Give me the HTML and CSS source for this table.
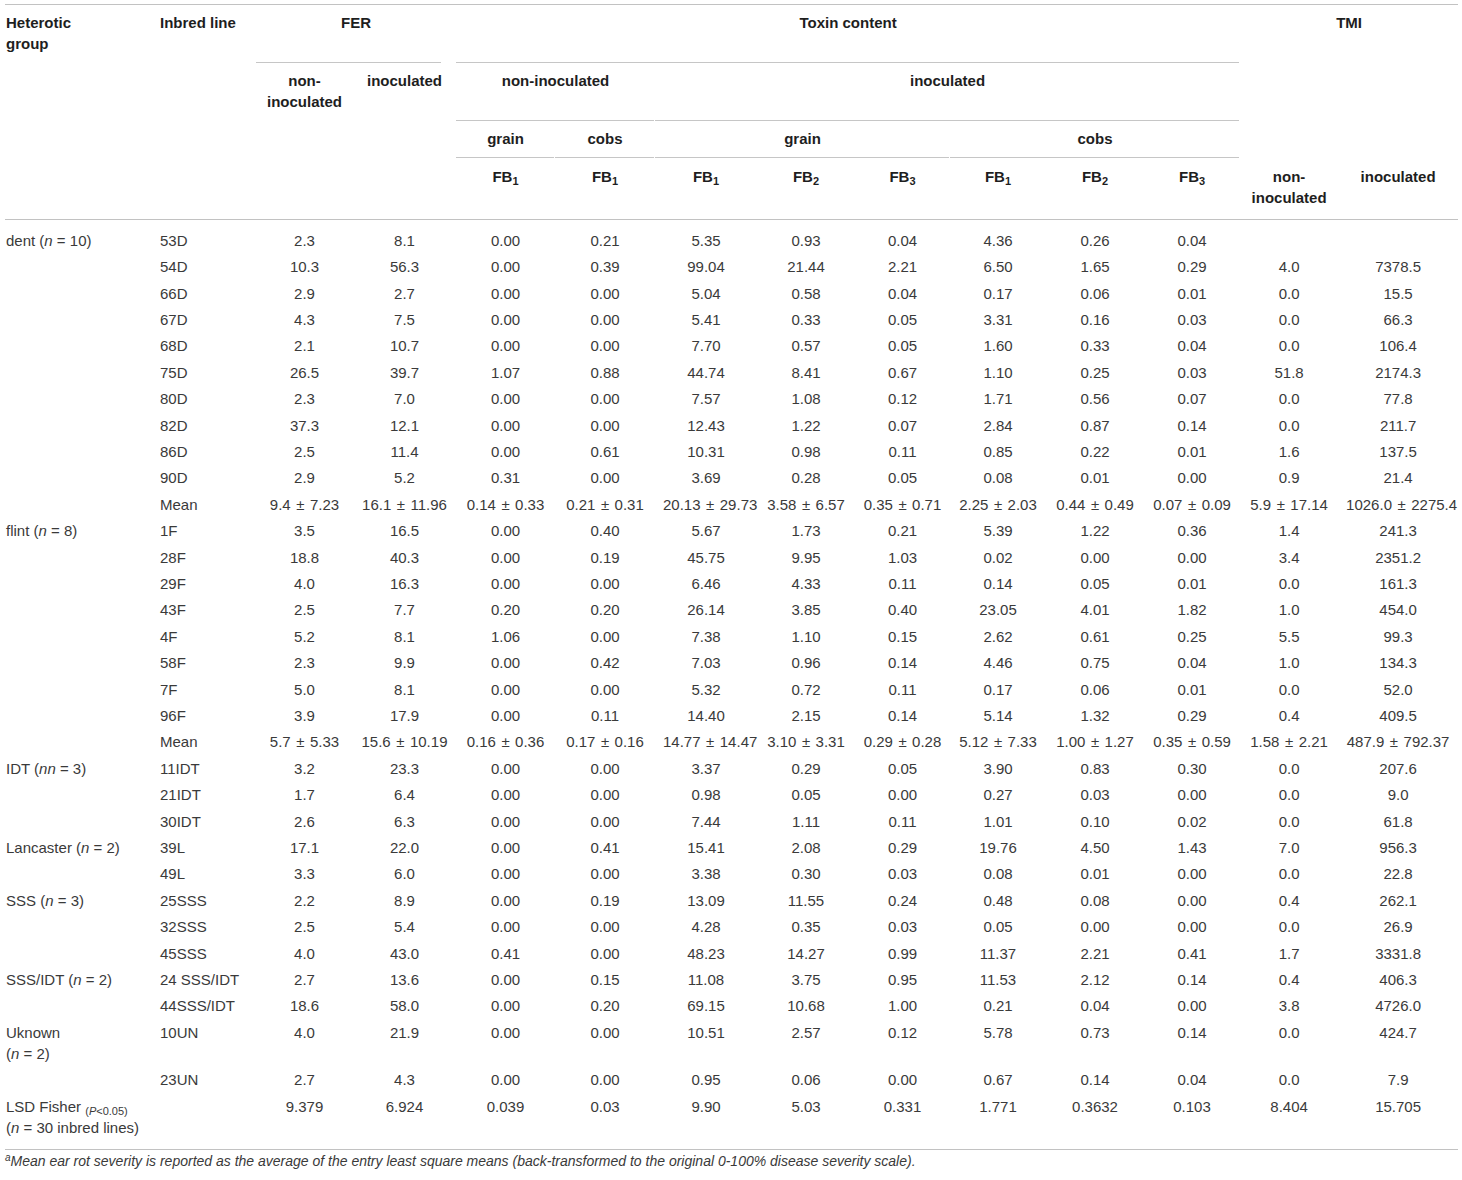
FILE: index.html
```html
<!DOCTYPE html>
<html lang="en">
<head>
<meta charset="utf-8">
<title>Table</title>
<link rel="stylesheet" href="styles.css">
</head>
<body>
<div class="wrap">
<table class="data">
<colgroup>
<col class="c1"><col class="c2"><col class="c3"><col class="c4"><col class="c5"><col class="c6"><col class="c7"><col class="c8"><col class="c9"><col class="c10"><col class="c11"><col class="c12"><col class="c13"><col class="c14">
</colgroup>
<thead>
<tr class="r1">
<th rowspan="4" class="l first">Heterotic group</th>
<th rowspan="4" class="l">Inbred line</th>
<th colspan="2" class="u ufer">FER</th>
<th colspan="8" class="u">Toxin content</th>
<th colspan="2" rowspan="3">TMI</th>
</tr>
<tr class="r2">
<th rowspan="3">non-inoculated</th>
<th rowspan="3">inoculated</th>
<th colspan="2" class="u">non-inoculated</th>
<th colspan="6" class="u">inoculated</th>
</tr>
<tr class="r3">
<th class="u">grain</th>
<th class="u">cobs</th>
<th colspan="3" class="u">grain</th>
<th colspan="3" class="u">cobs</th>
</tr>
<tr class="r4">
<th>FB<sub class="s">1</sub></th>
<th>FB<sub class="s">1</sub></th>
<th>FB<sub class="s">1</sub></th>
<th>FB<sub class="s">2</sub></th>
<th>FB<sub class="s">3</sub></th>
<th>FB<sub class="s">1</sub></th>
<th>FB<sub class="s">2</sub></th>
<th>FB<sub class="s">3</sub></th>
<th>non-inoculated</th>
<th>inoculated</th>
</tr>
</thead>
<tbody>
<tr class="top"><td>dent (<i>n</i> = 10)</td><td>53D</td><td>2.3</td><td>8.1</td><td>0.00</td><td>0.21</td><td>5.35</td><td>0.93</td><td>0.04</td><td>4.36</td><td>0.26</td><td>0.04</td><td></td><td></td></tr>
<tr><td></td><td>54D</td><td>10.3</td><td>56.3</td><td>0.00</td><td>0.39</td><td>99.04</td><td>21.44</td><td>2.21</td><td>6.50</td><td>1.65</td><td>0.29</td><td>4.0</td><td>7378.5</td></tr>
<tr><td></td><td>66D</td><td>2.9</td><td>2.7</td><td>0.00</td><td>0.00</td><td>5.04</td><td>0.58</td><td>0.04</td><td>0.17</td><td>0.06</td><td>0.01</td><td>0.0</td><td>15.5</td></tr>
<tr><td></td><td>67D</td><td>4.3</td><td>7.5</td><td>0.00</td><td>0.00</td><td>5.41</td><td>0.33</td><td>0.05</td><td>3.31</td><td>0.16</td><td>0.03</td><td>0.0</td><td>66.3</td></tr>
<tr><td></td><td>68D</td><td>2.1</td><td>10.7</td><td>0.00</td><td>0.00</td><td>7.70</td><td>0.57</td><td>0.05</td><td>1.60</td><td>0.33</td><td>0.04</td><td>0.0</td><td>106.4</td></tr>
<tr><td></td><td>75D</td><td>26.5</td><td>39.7</td><td>1.07</td><td>0.88</td><td>44.74</td><td>8.41</td><td>0.67</td><td>1.10</td><td>0.25</td><td>0.03</td><td>51.8</td><td>2174.3</td></tr>
<tr><td></td><td>80D</td><td>2.3</td><td>7.0</td><td>0.00</td><td>0.00</td><td>7.57</td><td>1.08</td><td>0.12</td><td>1.71</td><td>0.56</td><td>0.07</td><td>0.0</td><td>77.8</td></tr>
<tr><td></td><td>82D</td><td>37.3</td><td>12.1</td><td>0.00</td><td>0.00</td><td>12.43</td><td>1.22</td><td>0.07</td><td>2.84</td><td>0.87</td><td>0.14</td><td>0.0</td><td>211.7</td></tr>
<tr><td></td><td>86D</td><td>2.5</td><td>11.4</td><td>0.00</td><td>0.61</td><td>10.31</td><td>0.98</td><td>0.11</td><td>0.85</td><td>0.22</td><td>0.01</td><td>1.6</td><td>137.5</td></tr>
<tr><td></td><td>90D</td><td>2.9</td><td>5.2</td><td>0.31</td><td>0.00</td><td>3.69</td><td>0.28</td><td>0.05</td><td>0.08</td><td>0.01</td><td>0.00</td><td>0.9</td><td>21.4</td></tr>
<tr><td></td><td>Mean</td><td>9.4<span class="pm">±</span>7.23</td><td>16.1<span class="pm">±</span>11.96</td><td>0.14<span class="pm">±</span>0.33</td><td>0.21<span class="pm">±</span>0.31</td><td>20.13<span class="pm">±</span>29.73</td><td>3.58<span class="pm">±</span>6.57</td><td>0.35<span class="pm">±</span>0.71</td><td>2.25<span class="pm">±</span>2.03</td><td>0.44<span class="pm">±</span>0.49</td><td>0.07<span class="pm">±</span>0.09</td><td>5.9<span class="pm">±</span>17.14</td><td>1026.0<span class="pm">±</span>2275.4</td></tr>
<tr><td>flint (<i>n</i> = 8)</td><td>1F</td><td>3.5</td><td>16.5</td><td>0.00</td><td>0.40</td><td>5.67</td><td>1.73</td><td>0.21</td><td>5.39</td><td>1.22</td><td>0.36</td><td>1.4</td><td>241.3</td></tr>
<tr><td></td><td>28F</td><td>18.8</td><td>40.3</td><td>0.00</td><td>0.19</td><td>45.75</td><td>9.95</td><td>1.03</td><td>0.02</td><td>0.00</td><td>0.00</td><td>3.4</td><td>2351.2</td></tr>
<tr><td></td><td>29F</td><td>4.0</td><td>16.3</td><td>0.00</td><td>0.00</td><td>6.46</td><td>4.33</td><td>0.11</td><td>0.14</td><td>0.05</td><td>0.01</td><td>0.0</td><td>161.3</td></tr>
<tr><td></td><td>43F</td><td>2.5</td><td>7.7</td><td>0.20</td><td>0.20</td><td>26.14</td><td>3.85</td><td>0.40</td><td>23.05</td><td>4.01</td><td>1.82</td><td>1.0</td><td>454.0</td></tr>
<tr><td></td><td>4F</td><td>5.2</td><td>8.1</td><td>1.06</td><td>0.00</td><td>7.38</td><td>1.10</td><td>0.15</td><td>2.62</td><td>0.61</td><td>0.25</td><td>5.5</td><td>99.3</td></tr>
<tr><td></td><td>58F</td><td>2.3</td><td>9.9</td><td>0.00</td><td>0.42</td><td>7.03</td><td>0.96</td><td>0.14</td><td>4.46</td><td>0.75</td><td>0.04</td><td>1.0</td><td>134.3</td></tr>
<tr><td></td><td>7F</td><td>5.0</td><td>8.1</td><td>0.00</td><td>0.00</td><td>5.32</td><td>0.72</td><td>0.11</td><td>0.17</td><td>0.06</td><td>0.01</td><td>0.0</td><td>52.0</td></tr>
<tr><td></td><td>96F</td><td>3.9</td><td>17.9</td><td>0.00</td><td>0.11</td><td>14.40</td><td>2.15</td><td>0.14</td><td>5.14</td><td>1.32</td><td>0.29</td><td>0.4</td><td>409.5</td></tr>
<tr><td></td><td>Mean</td><td>5.7<span class="pm">±</span>5.33</td><td>15.6<span class="pm">±</span>10.19</td><td>0.16<span class="pm">±</span>0.36</td><td>0.17<span class="pm">±</span>0.16</td><td>14.77<span class="pm">±</span>14.47</td><td>3.10<span class="pm">±</span>3.31</td><td>0.29<span class="pm">±</span>0.28</td><td>5.12<span class="pm">±</span>7.33</td><td>1.00<span class="pm">±</span>1.27</td><td>0.35<span class="pm">±</span>0.59</td><td>1.58<span class="pm">±</span>2.21</td><td>487.9<span class="pm">±</span>792.37</td></tr>
<tr><td>IDT (<i>nn</i> = 3)</td><td>11IDT</td><td>3.2</td><td>23.3</td><td>0.00</td><td>0.00</td><td>3.37</td><td>0.29</td><td>0.05</td><td>3.90</td><td>0.83</td><td>0.30</td><td>0.0</td><td>207.6</td></tr>
<tr><td></td><td>21IDT</td><td>1.7</td><td>6.4</td><td>0.00</td><td>0.00</td><td>0.98</td><td>0.05</td><td>0.00</td><td>0.27</td><td>0.03</td><td>0.00</td><td>0.0</td><td>9.0</td></tr>
<tr><td></td><td>30IDT</td><td>2.6</td><td>6.3</td><td>0.00</td><td>0.00</td><td>7.44</td><td>1.11</td><td>0.11</td><td>1.01</td><td>0.10</td><td>0.02</td><td>0.0</td><td>61.8</td></tr>
<tr><td>Lancaster (<i>n</i> = 2)</td><td>39L</td><td>17.1</td><td>22.0</td><td>0.00</td><td>0.41</td><td>15.41</td><td>2.08</td><td>0.29</td><td>19.76</td><td>4.50</td><td>1.43</td><td>7.0</td><td>956.3</td></tr>
<tr><td></td><td>49L</td><td>3.3</td><td>6.0</td><td>0.00</td><td>0.00</td><td>3.38</td><td>0.30</td><td>0.03</td><td>0.08</td><td>0.01</td><td>0.00</td><td>0.0</td><td>22.8</td></tr>
<tr><td>SSS (<i>n</i> = 3)</td><td>25SSS</td><td>2.2</td><td>8.9</td><td>0.00</td><td>0.19</td><td>13.09</td><td>11.55</td><td>0.24</td><td>0.48</td><td>0.08</td><td>0.00</td><td>0.4</td><td>262.1</td></tr>
<tr><td></td><td>32SSS</td><td>2.5</td><td>5.4</td><td>0.00</td><td>0.00</td><td>4.28</td><td>0.35</td><td>0.03</td><td>0.05</td><td>0.00</td><td>0.00</td><td>0.0</td><td>26.9</td></tr>
<tr><td></td><td>45SSS</td><td>4.0</td><td>43.0</td><td>0.41</td><td>0.00</td><td>48.23</td><td>14.27</td><td>0.99</td><td>11.37</td><td>2.21</td><td>0.41</td><td>1.7</td><td>3331.8</td></tr>
<tr><td>SSS/IDT (<i>n</i> = 2)</td><td>24 SSS/IDT</td><td>2.7</td><td>13.6</td><td>0.00</td><td>0.15</td><td>11.08</td><td>3.75</td><td>0.95</td><td>11.53</td><td>2.12</td><td>0.14</td><td>0.4</td><td>406.3</td></tr>
<tr><td></td><td>44SSS/IDT</td><td>18.6</td><td>58.0</td><td>0.00</td><td>0.20</td><td>69.15</td><td>10.68</td><td>1.00</td><td>0.21</td><td>0.04</td><td>0.00</td><td>3.8</td><td>4726.0</td></tr>
<tr><td>Uknown<br>(<i>n</i> = 2)</td><td>10UN</td><td>4.0</td><td>21.9</td><td>0.00</td><td>0.00</td><td>10.51</td><td>2.57</td><td>0.12</td><td>5.78</td><td>0.73</td><td>0.14</td><td>0.0</td><td>424.7</td></tr>
<tr><td></td><td>23UN</td><td>2.7</td><td>4.3</td><td>0.00</td><td>0.00</td><td>0.95</td><td>0.06</td><td>0.00</td><td>0.67</td><td>0.14</td><td>0.04</td><td>0.0</td><td>7.9</td></tr>
<tr class="last"><td>LSD Fisher <sub class="p">(<i>P</i>&lt;0.05)</sub><br>(<i>n</i> = 30 inbred lines)</td><td></td><td>9.379</td><td>6.924</td><td>0.039</td><td>0.03</td><td>9.90</td><td>5.03</td><td>0.331</td><td>1.771</td><td>0.3632</td><td>0.103</td><td>8.404</td><td>15.705</td></tr>
</tbody>
</table>
<p class="note"><sup>a</sup>Mean ear rot severity is reported as the average of the entry least square means (back-transformed to the original 0-100% disease severity scale).</p>
</div>
</body>
</html>
```
FILE: styles.css
```css
html, body {
  margin: 0;
  padding: 0;
  background: #ffffff;
}
body {
  font-family: "Liberation Sans", Arial, Helvetica, sans-serif;
  color: #3a3a3a;
}
.wrap {
  padding: 4px 4px 0 5px;
}
table.data {
  border-collapse: collapse;
  table-layout: fixed;
  width: 1453px;
  font-size: 15px;
  line-height: 21px;
  border-top: 1px solid #c2c2c2;
  border-bottom: 1px solid #c2c2c2;
}
.c1 { width: 147px; }
.c2 { width: 104px; }
.c3 { width: 97px; }
.c4 { width: 103px; }
.c5 { width: 99px; }
.c6 { width: 100px; }
.c7 { width: 102px; }
.c8 { width: 98px; }
.c9 { width: 95px; }
.c10 { width: 96px; }
.c11 { width: 98px; }
.c12 { width: 96px; }
.c13 { width: 98px; }
.c14 { width: 120px; }

thead th {
  font-weight: bold;
  color: #1e1e1e;
  vertical-align: top;
  text-align: center;
  padding: 7px 8px 0 8px;
}
thead th.l { text-align: left; }
thead th.first { padding-left: 1px; padding-right: 50px; }
.r1 { height: 58px; }
.r2 { height: 58px; }
.r3 { height: 37px; }
.r4 { height: 62px; }
.r4 th { padding-top: 8px; }

.u {
  background: linear-gradient(#c6c6c6, #c6c6c6) left bottom / calc(100% - 1px) 1px no-repeat;
}
.ufer {
  background-size: calc(100% - 15px) 1px;
}
.s {
  font-size: 11px;
  line-height: 0;
  vertical-align: -3px;
}

tbody td {
  text-align: center;
  vertical-align: top;
  padding: 2.71px 8px;
  white-space: nowrap;
}
tbody td:first-child {
  text-align: left;
  padding-left: 1px;
  padding-right: 4px;
}
tbody td:nth-child(2) { text-align: left; }
tbody tr.top td {
  border-top: 1px solid #c2c2c2;
  padding-top: 9.7px;
}
tbody tr.last td { padding-bottom: 11px; }
.pm {
  margin: 0 5.5px;
}
.p {
  font-size: 11px;
  line-height: 0;
  vertical-align: -3px;
}
.note {
  margin: 1px 0 0 0;
  font-size: 14px;
  line-height: 20px;
  font-style: italic;
  color: #3a3a3a;
}
.note sup {
  font-size: 10px;
  line-height: 0;
  vertical-align: 5px;
}
```
